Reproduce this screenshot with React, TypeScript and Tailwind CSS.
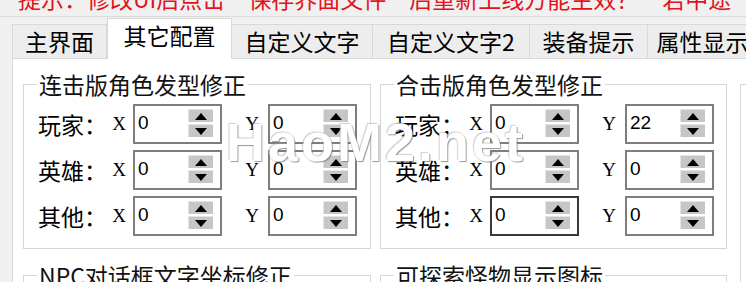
import React from 'react';

const cjk = "font-['SimSun','Noto_Sans_CJK_SC',sans-serif]";

function Spin() {
  return (
    <div className="flex flex-col gap-[2px] w-[25px] mr-[7px] mt-[3px]">
      <div className="h-[13px] bg-[#c6c6c6] border-t border-l border-[#e4e4e4] flex items-center justify-center">
        <svg width="12" height="7" viewBox="0 0 12 7"><path d="M6 0 L12 7 L0 7 Z" fill="#000" /></svg>
      </div>
      <div className="h-[13px] bg-[#c6c6c6] border-t border-l border-[#e4e4e4] flex items-center justify-center">
        <svg width="12" height="7" viewBox="0 0 12 7"><path d="M0 0 L12 0 L6 7 Z" fill="#000" /></svg>
      </div>
    </div>
  );
}

function NumBox({ value, dark }: { value: string; dark?: boolean }) {
  return (
    <div
      className={`flex items-start h-[40px] w-[89px] border-2 bg-white ${dark ? 'border-[#3a3a3a]' : 'border-[#7e7e7e]'}`}
    >
      <span className="flex-1 pl-[3px] pt-[7px] text-[19px] leading-[19px] font-['Liberation_Sans',sans-serif] text-black">
        {value}
      </span>
      <Spin />
    </div>
  );
}

function Row({ label, x, y, darkX }: { label: string; x: string; y: string; darkX?: boolean }) {
  return (
    <div className="flex items-center h-[40px]">
      <span className={`w-[72px] ml-[14px] text-[23px] leading-[23px] ${cjk}`}>{label}</span>
      <span className="w-[18px] text-center text-[19px] font-['Liberation_Serif',serif]">X</span>
      <div className="ml-[5px]">
        <NumBox value={x} dark={darkX} />
      </div>
      <span className="w-[46px] pr-[9px] text-right text-[19px] font-['Liberation_Serif',serif]">Y</span>
      <NumBox value={y} />
    </div>
  );
}

function Group({ title, width, children }: { title: string; width: string; children?: React.ReactNode }) {
  return (
    <fieldset className={`${width} border border-[#d6d6d6] pb-[12px]`}>
      <legend className={`ml-[13px] px-[2px] text-[23px] leading-[23px] ${cjk} text-[#111]`}>{title}</legend>
      <div className="flex flex-col gap-[6px] pt-[8px]">{children}</div>
    </fieldset>
  );
}

const tabs = ['主界面', '其它配置', '自定义文字', '自定义文字2', '装备提示', '属性显示'];
const tabW = ['w-[95px]', 'w-[125px]', 'w-[141px]', 'w-[157px]', 'w-[118px]', 'w-[110px]'];

export default function App() {
  return (
    <div className={`relative w-[746px] h-[282px] overflow-hidden bg-[#f0f0f0] ${cjk}`}>
      <div className="h-[17px] border-b border-[#dcdcdc] overflow-hidden">
        <div className="-mt-[13px] pl-[18px] whitespace-nowrap text-[23px] leading-[23px] text-[#e3121b]">
          提示：修改UI后点击“保存界面文件”后重新上线方能生效？　若中途
        </div>
      </div>

      <div className="flex items-end pl-[12px] h-[41px]">
        {tabs.map((t, i) =>
          i === 1 ? (
            <div
              key={t}
              className={`${tabW[i]} shrink-0 h-[41px] -mb-px relative z-10 bg-white border border-b-0 border-[#d9d9d9] text-center pt-[5px] text-[23px] leading-[23px] text-black`}
            >
              {t}
            </div>
          ) : (
            <div
              key={t}
              className={`${tabW[i]} shrink-0 h-[34px] bg-[#ededed] border border-b-0 border-[#d9d9d9] ${i === 0 ? '' : 'border-l-0'} flex items-center justify-center text-[23px] leading-[23px] text-black`}
            >
              {t}
            </div>
          )
        )}
      </div>

      <div className="ml-[12px] h-[240px] bg-white border-l border-t border-[#d9d9d9] flex gap-[9px] pl-[10px] pt-[14px]">
        <div className="flex flex-col gap-[15px]">
          <Group title="连击版角色发型修正" width="w-[348px]">
            <Row label="玩家：" x="0" y="0" />
            <Row label="英雄：" x="0" y="0" />
            <Row label="其他：" x="0" y="0" />
          </Group>
          <Group title="NPC对话框文字坐标修正" width="w-[348px]">
            <div className="h-[40px]" />
          </Group>
        </div>
        <div className="flex flex-col gap-[15px]">
          <Group title="合击版角色发型修正" width="w-[347px]">
            <Row label="玩家：" x="0" y="22" />
            <Row label="英雄：" x="0" y="0" />
            <Row label="其他：" x="0" y="0" darkX />
          </Group>
          <Group title="可探索怪物显示图标" width="w-[347px]">
            <div className="h-[40px]" />
          </Group>
        </div>
        <div className="ml-[4px] flex flex-col">
          <fieldset className="w-[40px] h-[200px] mt-[11px] border border-[#d6d6d6]" />
        </div>
      </div>

      <div className="absolute left-[226px] top-[112px] text-[54px] leading-[60px] font-bold tracking-[3px] font-['Liberation_Sans',sans-serif] text-white [text-shadow:1px_1px_1px_rgba(110,110,110,0.7),-1px_-1px_1px_rgba(160,160,160,0.5)] pointer-events-none">
        HaoM2.net
      </div>
    </div>
  );
}
